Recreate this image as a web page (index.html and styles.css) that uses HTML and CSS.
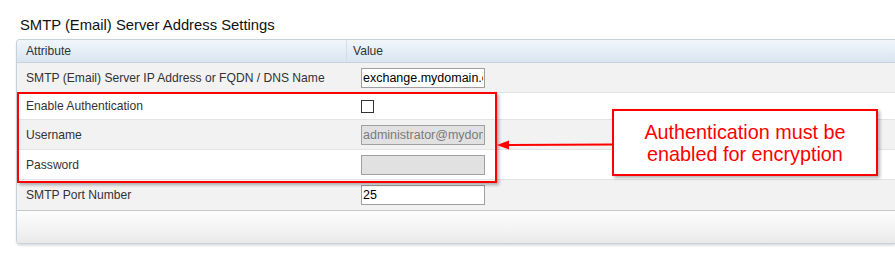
FILE: index.html
```html
<!DOCTYPE html>
<html lang="en">

<head>
    <meta charset="UTF-8">
    <title>SMTP (Email) Server Address Settings</title>
    <link rel="stylesheet" href="styles.css">
</head>

<body>
    <div class="page">
        <h2 class="section-title">SMTP (Email) Server Address Settings</h2>

        <div class="panel">
            <div class="row header-row">
                <div class="cell attr">Attribute</div>
                <div class="cell value">Value</div>
            </div>
            <div class="row gray">
                <div class="cell attr">SMTP (Email) Server IP Address or FQDN / DNS Name</div>
                <div class="cell value"><input class="field" type="text" value="exchange.mydomain.com"></div>
            </div>
            <div class="row short">
                <div class="cell attr">Enable Authentication</div>
                <div class="cell value"><span class="check"></span></div>
            </div>
            <div class="row gray">
                <div class="cell attr">Username</div>
                <div class="cell value"><input class="field disabled" type="text" value="administrator@mydomain.com" disabled></div>
            </div>
            <div class="row">
                <div class="cell attr">Password</div>
                <div class="cell value"><input class="field disabled" type="password" value="" disabled></div>
            </div>
            <div class="row gray last">
                <div class="cell attr">SMTP Port Number</div>
                <div class="cell value"><input class="field" type="text" value="25"></div>
            </div>
            <div class="panel-footer"></div>
        </div>

        <!-- annotation overlay -->
        <div class="highlight"></div>
        <svg class="arrow" width="120" height="14" viewBox="0 0 120 14">
            <path d="M10 7 L116 6.5" stroke="#ff0000" stroke-width="2" fill="none" />
            <path d="M0 7 L12 2.5 L12 11.5 Z" fill="#ff0000" />
        </svg>
        <div class="callout">Authentication must be<br>enabled for encryption</div>
    </div>
</body>

</html>
```

FILE: styles.css
```css
body {
    margin: 0;
    background: #ffffff;
    font-family: 'Liberation Sans', Arial, sans-serif;
    color: #333;
}

.page {
    position: relative;
    width: 895px;
    height: 266px;
    overflow: hidden;
}

.section-title {
    margin: 0;
    padding: 16px 0 0 20px;
    height: 23px;
    font-size: 14.8px;
    font-weight: normal;
    color: #111;
    line-height: 18px;
}

.panel {
    margin-left: 16px;
    border: 1px solid #c9d0d6;
    border-right: none;
    border-radius: 4px 0 0 4px;
    box-shadow: 0 2px 2px rgba(0, 0, 0, 0.12);
    overflow: hidden;
}

.row {
    display: grid;
    grid-template-columns: 330px 1fr;
    height: 29px;
    border-bottom: 1px solid #e3e3e3;
    background: #ffffff;
    font-size: 12.1px;
}

.row.short {
    height: 26px;
}

.row.gray {
    background: #f2f2f2;
}

.row.last {
    height: 30px;
    border-bottom: 1px solid #c8c8c8;
}

.header-row {
    height: 22px;
    background: linear-gradient(#f1f6fb, #d9e5f1);
    border-bottom: 1px solid #c9d3dc;
}

.header-row .attr {
    border-right: 1px solid #d5dee7;
}

.cell {
    display: flex;
    align-items: center;
}

.cell.attr {
    padding-left: 9px;
}

.cell.value {
    padding-left: 14px;
}

.header-row .cell.value {
    padding-left: 6px;
}

.field {
    box-sizing: border-box;
    width: 124px;
    height: 20px;
    margin: 0;
    padding: 0 1px;
    border: 1px solid #a0a0a0;
    background: #fff;
    font-family: 'Liberation Sans', Arial, sans-serif;
    font-size: 12.5px;
    color: #000;
    outline: none;
}

.field.disabled {
    background: #e1e1e1;
    color: #7a7a7a;
}

.check {
    box-sizing: border-box;
    width: 13px;
    height: 13px;
    border: 1px solid #333;
    background: #fff;
}

.panel-footer {
    height: 32px;
    background: linear-gradient(#fbfcfb, #f3f3f3 60%, #e9e9e9);
}

.highlight {
    position: absolute;
    left: 17px;
    top: 92px;
    width: 476px;
    height: 87px;
    border: 2px solid #ff0000;
    box-shadow: 2px 2px 3px rgba(0, 0, 0, 0.3);
}

.arrow {
    position: absolute;
    left: 497px;
    top: 138px;
}

.callout {
    position: absolute;
    left: 612px;
    top: 109px;
    width: 262px;
    height: 63px;
    border: 2px solid #ff0000;
    background: #fff;
    box-shadow: 2px 2px 3px rgba(0, 0, 0, 0.3);
    color: #ff0000;
    font-size: 19.8px;
    line-height: 22px;
    text-align: center;
    display: flex;
    align-items: center;
    justify-content: center;
}
```
